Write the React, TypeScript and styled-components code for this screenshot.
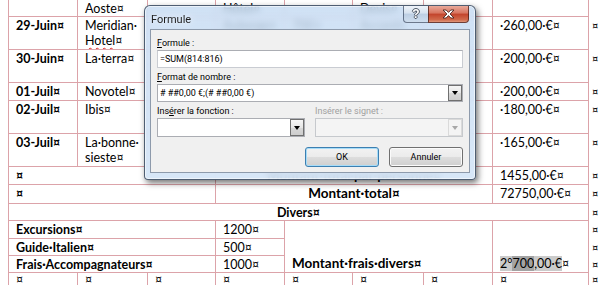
import React from "react";
import styled, { createGlobalStyle } from "styled-components";

const GlobalStyle = createGlobalStyle`
  html, body {
    margin: 0;
    padding: 0;
    background: #fff;
  }
  body {
    width: 600px;
    height: 285px;
    overflow: hidden;
  }
`;

const COLS = [69, 70, 68, 69, 68, 71, 69, 96, 12];

const Page = styled.div`
  position: relative;
  width: 600px;
  height: 285px;
  overflow: hidden;
  padding-left: 8px;
  box-sizing: border-box;
`;

const Sheet = styled.table`
  border-collapse: collapse;
  table-layout: fixed;
  width: 592px;
  font-family: Lato, "Liberation Sans", sans-serif;
  font-size: 12.5px;
  line-height: 15px;
  color: #000;
`;

const Col = styled.col<{ $w: number }>`
  width: ${(p) => p.$w}px;
`;

const Row = styled.tr<{ $h: number; $tight?: boolean }>`
  height: ${(p) => p.$h}px;
  ${(p) => (p.$tight ? "line-height: 12px;" : "")}
`;

const Cell = styled.td<{
  $bold?: boolean;
  $center?: boolean;
  $bottom?: boolean;
  $big?: boolean;
  $noTop?: boolean;
}>`
  border: 1px solid #dca3a9;
  ${(p) => (p.$noTop ? "border-top: none;" : "")}
  padding: ${(p) => (p.$bottom ? "0 7px 1px" : "1px 7px 0")};
  vertical-align: ${(p) => (p.$bottom ? "bottom" : "top")};
  text-align: ${(p) => (p.$center ? "center" : "left")};
  font-weight: ${(p) => (p.$bold ? 700 : 400)};
  font-size: ${(p) => (p.$big ? "13.5px" : "12.5px")};
  white-space: nowrap;
  overflow: hidden;
`;

const Mark = styled.td`
  border: none;
  padding: 1px 0 0 3px;
  vertical-align: top;
  font-size: 11px;
  white-space: nowrap;
  overflow: hidden;
`;

const Misspelled = styled.span`
  text-decoration: underline wavy #e02525;
  text-decoration-thickness: 1px;
  text-underline-offset: 2px;
  text-decoration-skip-ink: none;
`;

const Shade = styled.span<{ $dark?: boolean }>`
  background: ${(p) => (p.$dark ? "#a3a3a3" : "#cbcbcb")};
`;

/* ---------- dialog ---------- */

const Dialog = styled.div`
  position: absolute;
  left: 144px;
  top: 5px;
  width: 332px;
  height: 175px;
  box-sizing: border-box;
  border: 1px solid rgba(45, 60, 80, 0.8);
  border-radius: 6px 6px 4px 4px;
  background: linear-gradient(
    rgba(196, 218, 242, 0.8),
    rgba(205, 224, 245, 0.88) 30%,
    rgba(212, 229, 247, 0.92)
  );
  backdrop-filter: blur(3px);
  box-shadow: 2px 3px 6px rgba(0, 0, 0, 0.55),
    inset 0 0 0 1px rgba(255, 255, 255, 0.55);
  display: flex;
  flex-direction: column;
  padding: 0 5px 6px;
  font-family: "Segoe UI", Roboto, "Liberation Sans", sans-serif;
`;

const TitleBar = styled.div`
  height: 23px;
  display: flex;
  align-items: flex-start;
`;

const Title = styled.div`
  padding: 7px 0 0 1px;
  font-size: 11px;
  line-height: 13px;
  color: #1e1e1e;
  text-shadow: 0 0 6px rgba(255, 255, 255, 0.9);
`;

const CaptionButtons = styled.div`
  margin-left: auto;
  margin-right: 1px;
  display: flex;
`;

const HelpButton = styled.div`
  width: 25px;
  height: 17px;
  box-sizing: border-box;
  border: 1px solid rgba(55, 70, 95, 0.7);
  border-top: none;
  border-right: none;
  border-radius: 0 0 0 4px;
  background: linear-gradient(#eef3f9, #d6e2ef 45%, #bccee3 50%, #cfdeee);
  display: flex;
  align-items: center;
  justify-content: center;
  font-family: "Liberation Sans", sans-serif;
  font-weight: 700;
  font-size: 12px;
  line-height: 12px;
  color: #fff;
  text-shadow: -1px 0 #505a68, 1px 0 #505a68, 0 -1px #505a68, 0 1px #505a68;
`;

const CloseButton = styled.div`
  width: 41px;
  height: 17px;
  box-sizing: border-box;
  border: 1px solid rgba(70, 30, 25, 0.75);
  border-top: none;
  border-radius: 0 0 4px 0;
  background: linear-gradient(#e9a99a, #d7735e 45%, #c2432b 50%, #d0694b 85%, #e0977b);
  display: flex;
  align-items: center;
  justify-content: center;
`;

const Client = styled.div`
  flex: 1;
  background: #f0f0f0;
  border: 1px solid #8d9aab;
  padding: 7px 6px 0;
  display: flex;
  flex-direction: column;
  font-size: 9px;
  color: #000;
`;

const Label = styled.div<{ $top?: number; $disabled?: boolean }>`
  margin-top: ${(p) => p.$top || 0}px;
  margin-bottom: 1px;
  height: 12px;
  line-height: 12px;
  white-space: nowrap;
  color: ${(p) => (p.$disabled ? "#a0a0a0" : "#000")};
`;

const Key = styled.span`
  text-decoration: underline;
  text-underline-offset: 1px;
`;

const TextBox = styled.div`
  height: 18px;
  box-sizing: border-box;
  border: 1px solid #c9ccd2;
  border-top-color: #abadb3;
  background: #fff;
  padding: 0 2px;
  line-height: 16px;
  white-space: nowrap;
`;

const Combo = styled.div<{ $disabled?: boolean; $h?: number }>`
  height: ${(p) => p.$h || 18}px;
  box-sizing: border-box;
  border: 1px solid ${(p) => (p.$disabled ? "#c6c9cd" : "#abadb3")};
  background: ${(p) => (p.$disabled ? "#f4f4f4" : "#fff")};
  display: flex;
  align-items: stretch;
  min-width: 0;
`;

const ComboText = styled.div`
  flex: 1;
  padding: 0 2px;
  line-height: 16px;
  white-space: nowrap;
  overflow: hidden;
`;

const DropButton = styled.div<{ $disabled?: boolean }>`
  width: 14px;
  box-sizing: border-box;
  margin: 0;
  border: 1px solid ${(p) => (p.$disabled ? "#dadada" : "#707070")};
  background: ${(p) =>
    p.$disabled
      ? "#f4f4f4"
      : "linear-gradient(#f6f6f6, #e6e6e6 50%, #d8d8d8 50%, #cdcdcd)"};
  display: flex;
  align-items: center;
  justify-content: center;
  &::after {
    content: "";
    border-left: 3.5px solid transparent;
    border-right: 3.5px solid transparent;
    border-top: 4px solid ${(p) => (p.$disabled ? "#a8a8a8" : "#000")};
  }
`;

const Pair = styled.div<{ $top?: number }>`
  display: grid;
  grid-template-columns: 1fr 1fr;
  column-gap: 10px;
  margin-top: ${(p) => p.$top || 0}px;
`;

const Actions = styled.div`
  margin-top: 10px;
  display: flex;
  justify-content: flex-end;
  gap: 10px;
`;

const Button = styled.div<{ $default?: boolean }>`
  width: 74px;
  height: 20px;
  box-sizing: border-box;
  border: 1px solid ${(p) => (p.$default ? "#3c7fb1" : "#707070")};
  border-radius: 3px;
  background: linear-gradient(#f2f2f2, #ebebeb 50%, #dddddd 50%, #cfcfcf);
  box-shadow: inset 0 0 0 1px ${(p) => (p.$default ? "#a6dcf8" : "#fbfbfb")};
  display: flex;
  align-items: center;
  justify-content: center;
  font-size: 9px;
  color: #000;
`;

const CloseGlyph = () => (
  <svg width="13" height="10" viewBox="0 0 13 10">
    <path
      d="M1 1h3.2l2.3 2.4L8.8 1H12L8.1 5 12 9H8.8L6.5 6.6 4.2 9H1l3.9-4z"
      fill="#fff"
      stroke="#4a2520"
      strokeWidth="0.9"
      strokeLinejoin="round"
    />
  </svg>
);

const FormulaDialog = () => (
  <Dialog>
    <TitleBar>
      <Title>Formule</Title>
      <CaptionButtons>
        <HelpButton>?</HelpButton>
        <CloseButton>
          <CloseGlyph />
        </CloseButton>
      </CaptionButtons>
    </TitleBar>
    <Client>
      <Label>
        <Key>F</Key>ormule :
      </Label>
      <TextBox>=SUM(814:816)</TextBox>
      <Label $top={3}>
        <Key>F</Key>ormat de nombre :
      </Label>
      <Combo>
        <ComboText># ##0,00 €;(# ##0,00 €)</ComboText>
        <DropButton />
      </Combo>
      <Pair $top={3}>
        <Label>
          Ins<Key>é</Key>rer la fonction :
        </Label>
        <Label $disabled>Insérer le signet :</Label>
      </Pair>
      <Pair>
        <Combo $h={19}>
          <ComboText />
          <DropButton />
        </Combo>
        <Combo $h={19} $disabled>
          <ComboText />
          <DropButton $disabled />
        </Combo>
      </Pair>
      <Actions>
        <Button $default>OK</Button>
        <Button>Annuler</Button>
      </Actions>
    </Client>
  </Dialog>
);

const Empty = () => <Cell />;

export default function App() {
  return (
    <>
      <GlobalStyle />
      <Page>
        <Sheet>
          <colgroup>
            {COLS.map((w, i) => (
              <Col key={i} $w={w} />
            ))}
          </colgroup>
          <tbody>
            <Row $h={15}>
              <Cell $noTop />
              <Cell $noTop>Aoste¤</Cell>
              <Cell $noTop />
              <Cell $noTop>Hôtel¤</Cell>
              <Cell $noTop />
              <Cell $noTop>Devis¤</Cell>
              <Cell $noTop />
              <Cell $noTop />
              <Mark />
            </Row>
            <Row $h={33}>
              <Cell $bold>29-Juin¤</Cell>
              <Cell>
                Meridian·
                <br />
                <Misspelled>Hotel</Misspelled>¤
              </Cell>
              <Empty />
              <Cell>Auberge¤</Cell>
              <Cell>70€¤</Cell>
              <Cell>Accord¤</Cell>
              <Empty />
              <Cell>·260,00·€¤</Cell>
              <Mark>¤</Mark>
            </Row>
            <Row $h={33}>
              <Cell $bold>30-Juin¤</Cell>
              <Cell>La·terra¤</Cell>
              <Empty />
              <Empty />
              <Empty />
              <Empty />
              <Empty />
              <Cell>·200,00·€¤</Cell>
              <Mark>¤</Mark>
            </Row>
            <Row $h={18}>
              <Cell $bold>01-Juil¤</Cell>
              <Cell>Novotel¤</Cell>
              <Empty />
              <Empty />
              <Empty />
              <Empty />
              <Empty />
              <Cell>·200,00·€¤</Cell>
              <Mark>¤</Mark>
            </Row>
            <Row $h={33}>
              <Cell $bold>02-Juil¤</Cell>
              <Cell>Ibis¤</Cell>
              <Empty />
              <Empty />
              <Empty />
              <Empty />
              <Empty />
              <Cell>·180,00·€¤</Cell>
              <Mark>¤</Mark>
            </Row>
            <Row $h={33}>
              <Cell $bold>03-Juil¤</Cell>
              <Cell>
                La·bonne·
                <br />
                sieste¤
              </Cell>
              <Empty />
              <Empty />
              <Empty />
              <Empty />
              <Empty />
              <Cell>·165,00·€¤</Cell>
              <Mark>¤</Mark>
            </Row>
            <Row $h={18}>
              <Cell colSpan={3} $bold>
                ¤
              </Cell>
              <Cell colSpan={4} $bold $big $center>
                Montant·total·par·personne¤
              </Cell>
              <Cell>1455,00·€¤</Cell>
              <Mark>¤</Mark>
            </Row>
            <Row $h={19}>
              <Cell colSpan={3} $bold>
                ¤
              </Cell>
              <Cell colSpan={4} $bold $big $center>
                Montant·total¤
              </Cell>
              <Cell>72750,00·€¤</Cell>
              <Mark>¤</Mark>
            </Row>
            <Row $h={17}>
              <Cell colSpan={8} $bold $center>
                Divers¤
              </Cell>
              <Mark>¤</Mark>
            </Row>
            <Row $h={18}>
              <Cell colSpan={3} $bold>
                Excursions¤
              </Cell>
              <Cell>1200¤</Cell>
              <Cell colSpan={3} rowSpan={3} $bold $big $bottom>
                Montant·frais·divers¤
              </Cell>
              <Cell rowSpan={3} $bottom>
                <Shade>2°</Shade>
                <Shade $dark>700</Shade>
                <Shade>,00·€</Shade>¤
              </Cell>
              <Mark>¤</Mark>
            </Row>
            <Row $h={16}>
              <Cell colSpan={3} $bold>
                Guide·Italien¤
              </Cell>
              <Cell>500¤</Cell>
              <Mark>¤</Mark>
            </Row>
            <Row $h={17}>
              <Cell colSpan={3} $bold>
                Frais·Accompagnateurs¤
              </Cell>
              <Cell>1000¤</Cell>
              <Mark>¤</Mark>
            </Row>
            <Row $h={14} $tight>
              <Cell>¤</Cell>
              <Cell>¤</Cell>
              <Cell>¤</Cell>
              <Cell>¤</Cell>
              <Cell>¤</Cell>
              <Cell>¤</Cell>
              <Cell>¤</Cell>
              <Cell>¤</Cell>
              <Mark>¤</Mark>
            </Row>
          </tbody>
        </Sheet>
        <FormulaDialog />
      </Page>
    </>
  );
}
